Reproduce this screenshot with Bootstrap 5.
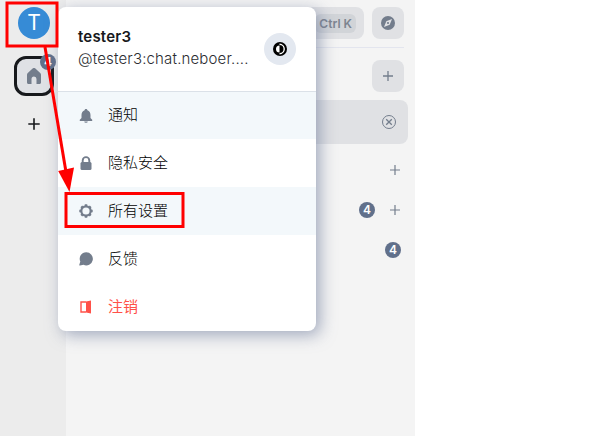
<!DOCTYPE html>
<html lang="zh-CN">
<head>
<meta charset="utf-8">
<meta name="viewport" content="width=device-width, initial-scale=1">
<title>Chat</title>
<link href="https://cdn.jsdelivr.net/npm/bootstrap@5.3.0/dist/css/bootstrap.min.css" rel="stylesheet">
<style>
body{font-family:Inter,"Noto Sans CJK SC",sans-serif;background:#fff;color:#17191c;overflow:hidden}
svg{display:block}
.app{width:415px;height:436px;background:#f4f4f4}
.rail{width:66px;background:#ececec;padding-top:7px}
.avatar{width:32px;height:32px;background:#368bd6;color:#fff;font-size:21px;line-height:32px;margin-left:2px}
.space{width:40px;height:40px;border:3px solid #17191c;border-radius:12px;background:#dfe1e5;margin:17px 0 0 2px;color:#737d8c}
.count{width:16px;height:16px;border-radius:50%;background:#61708b;color:#fff;font-size:12px;font-weight:600;line-height:16px;text-align:center}
.space .count{position:absolute;right:-5px;top:-5px}
.add-space{margin:22px 0 0 2px}
.rooms{padding:7px 7px 0 16px}
.search{height:32px;border-radius:8px;background:#e0e1e4;padding-right:8px}
.kbd-hint{font-size:12px;font-weight:600;color:#7d8490;background:#d1d4d8;border-radius:6px;height:19px;line-height:20px;padding:0 4px}
.tool{width:32px;height:32px;border-radius:8px;background:#e0e1e4;color:#737d8c}
.split{height:1px;background:#e3e5ee;margin:8px 4px 12px 0}
.recover{height:44px;border-radius:8px;background:#e0e1e4;margin:8px 0 6px;padding-right:12px;color:#737d8c}
.line{height:40px;padding-right:7px;gap:14px;color:#737d8c}
.menu{left:58px;top:7px;width:258px;height:324px;background:#fff;border-radius:8px;box-shadow:4px 4px 16px rgba(110,122,155,.62);overflow:hidden}
.profile{height:85px;padding:0 20px 2px;border-bottom:1px solid #dbe1e8}
.who{font-size:15px;line-height:22px;width:172px}
.who strong{font-weight:600;letter-spacing:.2px}
.handle{color:#2b2d31;font-weight:300;letter-spacing:.16px}
.theme{width:32px;height:32px;background:#e3e8f0;color:#000;margin-top:2px}
.entry{height:48px;padding-left:20px;font-size:15px;font-weight:300;gap:14px;color:#000}
.entry.first{height:47px}
.entry svg{color:#737d8c}
.tint{background:#f3f8fb}
.entry.leave,.entry.leave svg{color:#ff5149}
.entry.leave span{font-weight:400}
.marks{left:0;top:0;pointer-events:none}
</style>
</head>
<body>
<div class="app d-flex position-relative">
  <nav class="rail d-flex flex-column align-items-center flex-shrink-0">
    <div class="avatar rounded-circle text-center">T</div>
    <div class="space position-relative d-flex align-items-center justify-content-center">
      <svg width="14" height="16" viewBox="0 0 14 16" fill="currentColor"><path d="M0 6.800c0-.7.3-1.300.8-1.700L5.600.6a2 2 0 0 1 2.800 0l4.800 4.500c.5.400.8 1 .8 1.700V14.500c0 .8-.7 1.500-1.500 1.500H9.500V11a2.500 2.500 0 0 0-5 0v5h-3C.7 16 0 15.300 0 14.500z"/></svg>
      <span class="count">4</span>
    </div>
    <svg class="add-space" width="12" height="12" viewBox="0 0 12 12" stroke="#17191c" stroke-width="1.600"><path d="M6 .3v11.400M.3 6h11.400"/></svg>
  </nav>
  <main class="rooms flex-grow-1">
    <div class="d-flex gap-2 pe-1">
      <div class="search flex-grow-1 d-flex align-items-center justify-content-end"><span class="kbd-hint">Ctrl K</span></div>
      <div class="tool d-flex align-items-center justify-content-center">
        <svg width="14" height="14" viewBox="0 0 14 14"><circle cx="7" cy="7" r="7" fill="currentColor"/><path d="M11 3 8.700 8.700 3 11 5.300 5.300z" fill="#e0e1e4"/><circle cx="7" cy="7" r="1.100" fill="currentColor"/></svg>
      </div>
    </div>
    <div class="split"></div>
    <div class="d-flex justify-content-end pe-1">
      <div class="tool d-flex align-items-center justify-content-center"><svg width="10" height="10" viewBox="0 0 10 10" stroke="currentColor" stroke-width="1.300"><path d="M5 0v10M0 5h10"/></svg></div>
    </div>
    <div class="recover d-flex align-items-center justify-content-end">
      <svg width="14" height="14" viewBox="0 0 14 14" fill="none" stroke="currentColor"><circle cx="7" cy="7" r="6.500"/><path d="m4.200 4.200 5.600 5.600m0-5.600L4.200 9.800" stroke-width="1.300"/></svg>
    </div>
    <div class="line d-flex align-items-center justify-content-end"><svg width="12" height="12" viewBox="0 0 12 12" stroke="currentColor" stroke-width="1.200"><path d="M6 1v10M1 6h10"/></svg></div>
    <div class="line d-flex align-items-center justify-content-end"><span class="count">4</span><svg width="12" height="12" viewBox="0 0 12 12" stroke="currentColor" stroke-width="1.200"><path d="M6 1v10M1 6h10"/></svg></div>
    <div class="line d-flex align-items-center justify-content-end"><span class="count">4</span></div>
  </main>

  <section class="menu position-absolute">
    <div class="profile d-flex align-items-center justify-content-between">
      <div class="who"><strong class="d-block">tester3</strong><span class="handle d-block text-nowrap">@tester3:chat.neboer....</span></div>
      <div class="theme rounded-circle d-flex align-items-center justify-content-center">
        <svg width="14" height="14" viewBox="0 0 14 14"><circle cx="7" cy="7" r="7" fill="currentColor"/><path d="M6.500 2.300a4.700 4.700 0 0 1 0 9.400" fill="none" stroke="#fff" stroke-width="1.400"/><path d="M6.500 3.500a3.500 3.500 0 0 0 0 7z" fill="#fff"/></svg>
      </div>
    </div>
    <div class="entry first d-flex align-items-center tint"><svg width="16" height="16" viewBox="0 0 16 16" fill="currentColor"><path d="M8 1c.8 0 1.300.5 1.400 1.200C11.400 2.800 12.500 4.700 12.500 7v3l1.700 1.800c.4.500.1 1.200-.5 1.200H2.300c-.6 0-.9-.7-.5-1.200L3.500 10V7c0-2.300 1.100-4.200 3.100-4.800C6.700 1.500 7.200 1 8 1zM6.200 13.500h3.600a1.800 1.200 0 0 1-3.600 0z"/></svg><span>通知</span></div>
    <div class="entry d-flex align-items-center"><svg width="16" height="16" viewBox="0 0 16 16" fill="currentColor"><rect x="2.500" y="7" width="11" height="8" rx="1.500"/><path d="M4.700 8V5.400a3.300 3.300 0 0 1 6.600 0V8" fill="none" stroke="currentColor" stroke-width="1.900"/></svg><span>隐私安全</span></div>
    <div class="entry d-flex align-items-center tint"><svg width="16" height="16" viewBox="0 0 16 16" fill="none" stroke="currentColor"><circle cx="8" cy="8" r="4.700" stroke-width="2.200"/><path d="M8 1.300v2M8 12.700v2M1.300 8h2M12.700 8h2M3.300 3.300l1.300 1.300M11.400 11.400l1.300 1.300M3.300 12.700l1.300-1.300M11.400 4.600l1.300-1.300" stroke-width="2.500"/></svg><span>所有设置</span></div>
    <div class="entry d-flex align-items-center"><svg width="16" height="16" viewBox="0 0 16 16" fill="currentColor"><path d="M8.200 1.200a6.600 6.600 0 1 1-2.700 12.600l-3.500.8c-.5.100-.9-.3-.7-.8l1-3.200A6.600 6.600 0 0 1 8.200 1.200z"/></svg><span>反馈</span></div>
    <div class="entry leave d-flex align-items-center"><svg width="16" height="16" viewBox="0 0 16 16" fill="currentColor"><path d="M8 3H3v10h5" fill="none" stroke="currentColor" stroke-width="1.400"/><path d="M8 2.400 13 1.500v13L8 13.600z"/></svg><span>注销</span></div>
  </section>

  <svg class="marks position-absolute" width="200" height="240" viewBox="0 0 200 240" fill="none" stroke="#f00" stroke-width="3"><rect x="7" y="3" width="50" height="43"/><rect x="66" y="193.500" width="117" height="33"/><path d="M45 47 66 172"/><path d="M58.200 171 74 167.500 69.500 192z" fill="#f00" stroke="none"/></svg>
</div>
<script src="https://cdn.jsdelivr.net/npm/bootstrap@5.3.0/dist/js/bootstrap.bundle.min.js"></script>
</body>
</html>
